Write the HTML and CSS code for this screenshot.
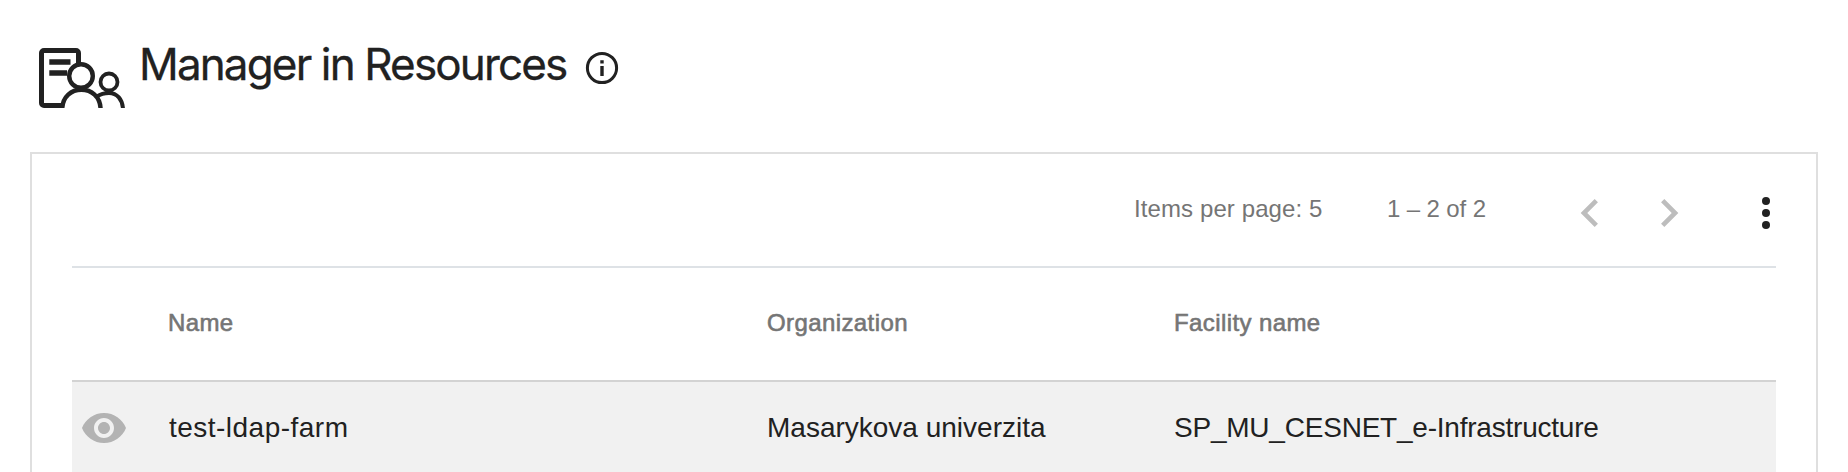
FILE: index.html
```html
<!DOCTYPE html>
<html lang="en">
<head>
<meta charset="utf-8">
<title>Manager in Resources</title>
<link rel="stylesheet" href="styles.css">
</head>
<body>
<header class="page-header">
  <svg class="resource-icon" viewBox="0 0 88 62" fill="none" stroke="#212121">
    <path d="M41.500 18V7a2.500 2.500 0 0 0-2.500-2.500H7A2.500 2.500 0 0 0 4.500 7v50A2.500 2.500 0 0 0 7 59.500H25" stroke-width="5"/>
    <path d="M12.300 16H33.500M12.300 27H30" stroke-width="5.600"/>
    <circle cx="44" cy="30" r="11.800" stroke-width="4.400"/>
    <circle cx="72" cy="36" r="8.500" stroke-width="3.800"/>
    <path d="M25.200 63C25.600 50.500 34.500 43.800 44.400 43.800S63.200 50.500 63.600 63" stroke-width="4.400"/>
    <path d="M60 50.500Q65 47 72 47C80 47 85.600 53.500 86 63" stroke-width="4"/>
  </svg>
  <h1 class="title">Manager in Resources</h1>
  <svg class="info-icon" viewBox="0 0 36 36" fill="#212121">
    <circle cx="18" cy="18" r="14.600" fill="none" stroke="#212121" stroke-width="3"/>
    <path d="M16.300 10.300h3.400v3.200h-3.400zM16.300 16h3.400v10h-3.400z"/>
  </svg>
</header>
<main class="card">
  <div class="paginator">
    <span class="page-size">Items per page: <span class="size-value">5</span></span>
    <span class="range">1 – 2 of 2</span>
    <svg class="nav-icon prev" viewBox="0 0 24 24"><path d="M15.410 7.410L14 6l-6 6 6 6 1.410-1.410L10.830 12z"/></svg>
    <svg class="nav-icon next" viewBox="0 0 24 24"><path d="M10 6L8.590 7.410 13.170 12l-4.580 4.590L10 18l6-6z"/></svg>
    <svg class="more-icon" viewBox="0 0 24 24"><circle cx="12" cy="6" r="2"/><circle cx="12" cy="12" r="2"/><circle cx="12" cy="18" r="2"/></svg>
  </div>
  <div class="row head">
    <span></span>
    <span class="h-name">Name</span>
    <span class="h-org">Organization</span>
    <span class="h-fac">Facility name</span>
  </div>
  <div class="row item">
    <svg class="eye" viewBox="0 0 24 24"><path d="M12 4.500C7 4.500 2.730 7.610 1 12c1.730 4.390 6 7.500 11 7.500s9.270-3.110 11-7.500c-1.730-4.390-6-7.500-11-7.500zM12 17c-2.760 0-5-2.240-5-5s2.240-5 5-5 5 2.240 5 5-2.240 5-5 5zm0-8c-1.660 0-3 1.340-3 3s1.340 3 3 3 3-1.340 3-3-1.340-3-3-3z"/></svg>
    <span class="c-name">test-ldap-farm</span>
    <span class="c-org">Masarykova univerzita</span>
    <span class="c-fac">SP_MU_CESNET_e-Infrastructure</span>
  </div>
</main>
</body>
</html>
```
FILE: styles.css
```css
* { box-sizing: border-box; }
html, body { height: 100%; }
body {
  margin: 0;
  overflow: hidden;
  background: #fff;
  color: #212121;
  font-family: "Liberation Sans", Arial, sans-serif;
}
svg { display: block; flex: none; }
span { white-space: nowrap; }
.page-header {
  display: flex;
  align-items: flex-start;
  height: 152px;
  padding: 46px 0 0 37px;
}
.resource-icon { width: 88px; height: 62px; margin-right: 14px; }
.title {
  margin: -8px 0 0;
  width: 445px;
  font: 400 44px/52px Inter, sans-serif;
  letter-spacing: -1.86px;
  -webkit-text-stroke: .3px #212121;
  white-space: nowrap;
}
.info-icon { width: 36px; height: 36px; margin-top: 4px; }
.card {
  margin: 0 30px;
  height: 320px;
  padding: 0 40px;
  border: 2px solid #dfdfdf;
  border-bottom: 0;
}
.paginator {
  display: flex;
  align-items: center;
  justify-content: flex-end;
  height: 114px;
  padding: 6px 0 0;
  border-bottom: 2px solid #dee2e6;
  color: #757575;
  font-size: 24px;
  line-height: 28px;
}
.page-size, .range { margin-top: -8px; }
.page-size { width: 191px; margin-right: 62px; letter-spacing: .1px; }
.range { width: 98px; margin-right: 77px; letter-spacing: -.12px; }
.nav-icon { width: 56px; height: 56px; fill: #bdbdbd; }
.prev { margin-right: 23px; }
.next { margin-right: 45px; }
.more-icon { width: 48px; height: 48px; margin-right: -14px; fill: #212121; }
.row {
  display: grid;
  grid-template-columns: 96px 599px 407px 1fr;
  align-items: center;
}
.head {
  height: 114px;
  padding-bottom: 2px;
  border-bottom: 2px solid #d3d3d3;
  color: #757575;
  font-size: 24px;
  letter-spacing: .4px;
  -webkit-text-stroke: .6px #757575;
}
.item { height: 92px; background: #f1f1f1; font-size: 28px; }
.eye { width: 48px; height: 48px; margin-left: 8px; fill: #b3b3b3; }
.c-name { padding-left: 1px; letter-spacing: .48px; }
.c-fac { letter-spacing: -.22px; }
```
